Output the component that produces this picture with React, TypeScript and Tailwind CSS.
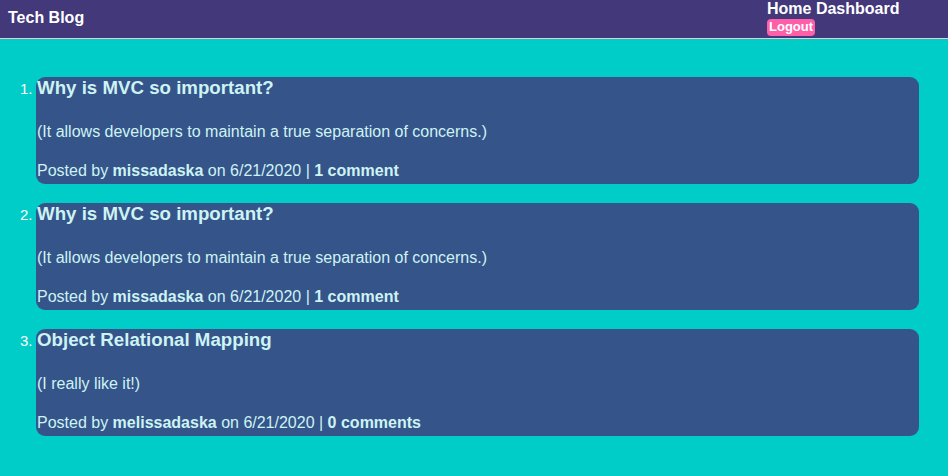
const posts = [
  { id: 1, title: "Why is MVC so important?", body: "(It allows developers to maintain a true separation of concerns.)", author: "missadaska", date: "6/21/2020", comments: "1 comment" },
  { id: 2, title: "Why is MVC so important?", body: "(It allows developers to maintain a true separation of concerns.)", author: "missadaska", date: "6/21/2020", comments: "1 comment" },
  { id: 3, title: "Object Relational Mapping", body: "(I really like it!)", author: "melissadaska", date: "6/21/2020", comments: "0 comments" },
];

export default function App() {
  return (
    <div className="min-h-screen w-full bg-[#00ccc8] font-['Liberation_Sans',Arial,sans-serif]">
      {/* Header */}
      <header className="h-[39px] bg-[#433879] border-b border-[#f0c8d0] flex items-start justify-between text-white">
        <h1 className="pl-2 pt-[9px] text-base font-bold leading-[18px]">Tech Blog</h1>
        <nav className="w-[181px] flex flex-col items-start">
          <div className="text-base font-bold leading-[17px]">Home Dashboard</div>
          <button className="mt-[2px] bg-[#ff5fa8] text-white text-[13px] font-bold leading-[16px] px-[2px] pb-[1px] rounded-[4px]">
            Logout
          </button>
        </nav>
      </header>

      {/* Posts */}
      <main className="pt-[38px] pl-[20px] pr-[29px]">
        <ol className="flex flex-col gap-[19px]">
          {posts.map((p) => (
            <li key={p.id} className="flex items-start">
              <span className="w-[16px] text-white text-[15px] leading-[22px] pt-px">{p.id}.</span>
              <div className="flex-1 bg-[#35548a] rounded-[9px] pb-[4px] text-[#cdf3f3]">
                <h3 className="text-[18.7px] font-bold leading-[22px] pl-px">{p.title}</h3>
                <p className="mt-[24px] text-base leading-[18px] pl-px">{p.body}</p>
                <p className="mt-[21px] text-base leading-[18px] pl-px">
                  Posted by <span className="font-bold">{p.author}</span> on {p.date} | <span className="font-bold">{p.comments}</span>
                </p>
              </div>
            </li>
          ))}
        </ol>
      </main>
    </div>
  );
}
